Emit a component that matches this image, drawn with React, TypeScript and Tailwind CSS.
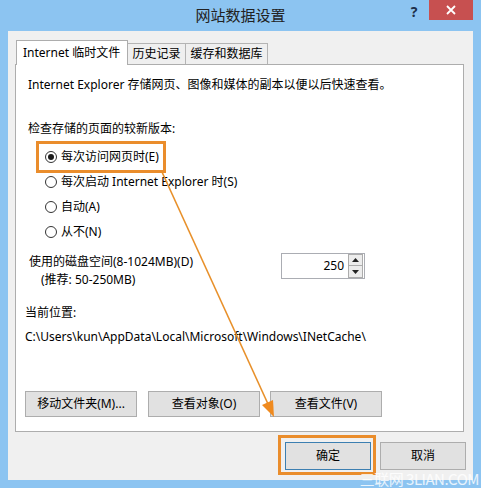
import React from "react";

const FONT = { fontFamily: '"Noto Sans", "Noto Sans CJK SC", sans-serif' };

function Radio({ checked, label }: { checked?: boolean; label: string }) {
  return (
    <div className="h-[25px] flex items-center pl-[29px]">
      <div className="w-[12px] h-[12px] rounded-full border border-[#333] bg-white flex items-center justify-center">
        {checked && <div className="w-[6px] h-[6px] rounded-full bg-[#1a1a1a]" />}
      </div>
      <span className="ml-[4px] text-[12px] leading-[16px] text-black">{label}</span>
    </div>
  );
}

function Btn({ label, w, focused }: { label: string; w: string; focused?: boolean }) {
  return (
    <div
      className={`${w} flex items-center justify-center text-[12px] leading-[16px] text-black bg-[#e1e1e1] border ${
        focused ? "border-[#3c7fb1]" : "border-[#adadad]"
      }`}
    >
      {label}
    </div>
  );
}

export default function App() {
  return (
    <div className="w-[481px] h-[488px] bg-[#8cc4f1] flex flex-col relative overflow-hidden" style={FONT}>
      {/* title bar */}
      <div className="h-[31px] grid grid-cols-[1fr_auto_1fr] items-start">
        <div />
        <div className="pt-[4px] text-[15px] leading-[22px] text-[#222]">网站数据设置</div>
        <div className="flex justify-end items-start pr-[8px]">
          <div className="w-[14px] h-[22px] mr-[8px] flex items-center justify-center text-[14px] font-bold text-[#1d2f4a]">
            ?
          </div>
          <div className="w-[44px] h-[20px] bg-[#c75050] flex items-center justify-center">
            <svg width="10" height="10" viewBox="0 0 10 10">
              <path d="M1 1 L9 9 M9 1 L1 9" stroke="#fff" strokeWidth="1.8" />
            </svg>
          </div>
        </div>
      </div>

      {/* client area */}
      <div className="mx-[8px] mb-[8px] flex-1 bg-[#f0f0f0] flex flex-col">
        {/* tabs */}
        <div className="pt-[9px] pl-[8px] flex items-end">
          <div className="relative z-10 h-[25px] -mb-[1px] w-[112px] bg-white border-l border-t border-r border-[#adadad] flex items-center pl-[6px] text-[12px] text-black">
            Internet 临时文件
          </div>
          <div className="h-[21px] w-[58px] bg-[#efefef] border-t border-r border-[#b4b4b4] flex items-center justify-center text-[12px] text-black">
            历史记录
          </div>
          <div className="h-[21px] w-[82px] bg-[#efefef] border-t border-r border-[#b4b4b4] flex items-center justify-center text-[12px] text-black">
            缓存和数据库
          </div>
        </div>

        {/* panel */}
        <div className="ml-[7px] mr-[9px] h-[368px] bg-white border border-[#adadad] flex flex-col">
          <div className="mt-[12px] pl-[12px] text-[12px] leading-[16px] text-black">
            Internet Explorer 存储网页、图像和媒体的副本以便以后快速查看。
          </div>
          <div className="mt-[28px] pl-[12px] text-[12px] leading-[16px] text-black">检查存储的页面的较新版本:</div>
          <div className="mt-[7px] flex flex-col">
            <Radio checked label="每次访问网页时(E)" />
            <Radio label="每次启动 Internet Explorer 时(S)" />
            <Radio label="自动(A)" />
            <Radio label="从不(N)" />
          </div>

          <div className="mt-[9px] flex items-start justify-between pr-[98px]">
            <div className="flex flex-col text-[12px] leading-[18px] text-black">
              <span className="pl-[13px]">使用的磁盘空间(8-1024MB)(D)</span>
              <span className="pl-[25px]">(推荐: 50-250MB)</span>
            </div>
            <div className="w-[84px] h-[26px] border border-[#abadb3] bg-white flex items-center justify-end pr-[1px]">
              <span className="text-[12px] leading-[16px] text-black mr-[4px]">250</span>
              <div className="flex flex-col w-[15px] h-[24px]">
                <div className="h-[12px] border border-[#acacac] bg-[#ececec] flex items-center justify-center">
                  <svg width="7" height="4" viewBox="0 0 7 4">
                    <path d="M0 4 L3.5 0 L7 4 Z" fill="#222" />
                  </svg>
                </div>
                <div className="h-[12px] border border-t-0 border-[#acacac] bg-[#ececec] flex items-center justify-center">
                  <svg width="7" height="4" viewBox="0 0 7 4">
                    <path d="M0 0 L3.5 4 L7 0 Z" fill="#222" />
                  </svg>
                </div>
              </div>
            </div>
          </div>

          <div className="mt-[16px] pl-[9px] text-[12px] leading-[16px] text-black">当前位置:</div>
          <div className="mt-[8px] pl-[9px] text-[12px] leading-[16px] text-black">
            C:\Users\kun\AppData\Local\Microsoft\Windows\INetCache\
          </div>

          <div className="mt-auto mb-[14px] pl-[9px] flex h-[26px]">
            <Btn label="移动文件夹(M)..." w="w-[112px]" />
            <div className="w-[11px]" />
            <Btn label="查看对象(O)" w="w-[112px]" />
            <div className="w-[10px]" />
            <Btn label="查看文件(V)" w="w-[112px]" />
          </div>
        </div>

        {/* bottom buttons */}
        <div className="mt-[10px] flex justify-end pr-[7px] h-[28px] gap-[9px]">
          <Btn label="确定" w="w-[86px]" focused />
          <Btn label="取消" w="w-[86px]" />
        </div>
      </div>

      {/* annotation overlays */}
      <div className="absolute left-[36px] top-[141px] w-[130px] h-[32px] border-[3px] border-[#ea8d2c] pointer-events-none" />
      <div className="absolute left-[278px] top-[435px] w-[98px] h-[40px] border-[3px] border-[#ea8d2c] pointer-events-none" />
      <svg className="absolute left-0 top-0 pointer-events-none" width="481" height="488" viewBox="0 0 481 488">
        <line x1="162" y1="172" x2="268" y2="404" stroke="#e8902a" strokeWidth="1.6" />
        <path d="M274 417 L273 400 L262 405 Z" fill="#ef8a1f" />
      </svg>

      {/* watermark */}
      <div className="absolute right-[2px] bottom-[1px] text-[15px] leading-[17px] text-white/80 tracking-[-0.5px] pointer-events-none" style={{ fontFamily: '"Noto Sans CJK SC", sans-serif' }}>
        三联网 3LIAN.COM
      </div>
    </div>
  );
}
